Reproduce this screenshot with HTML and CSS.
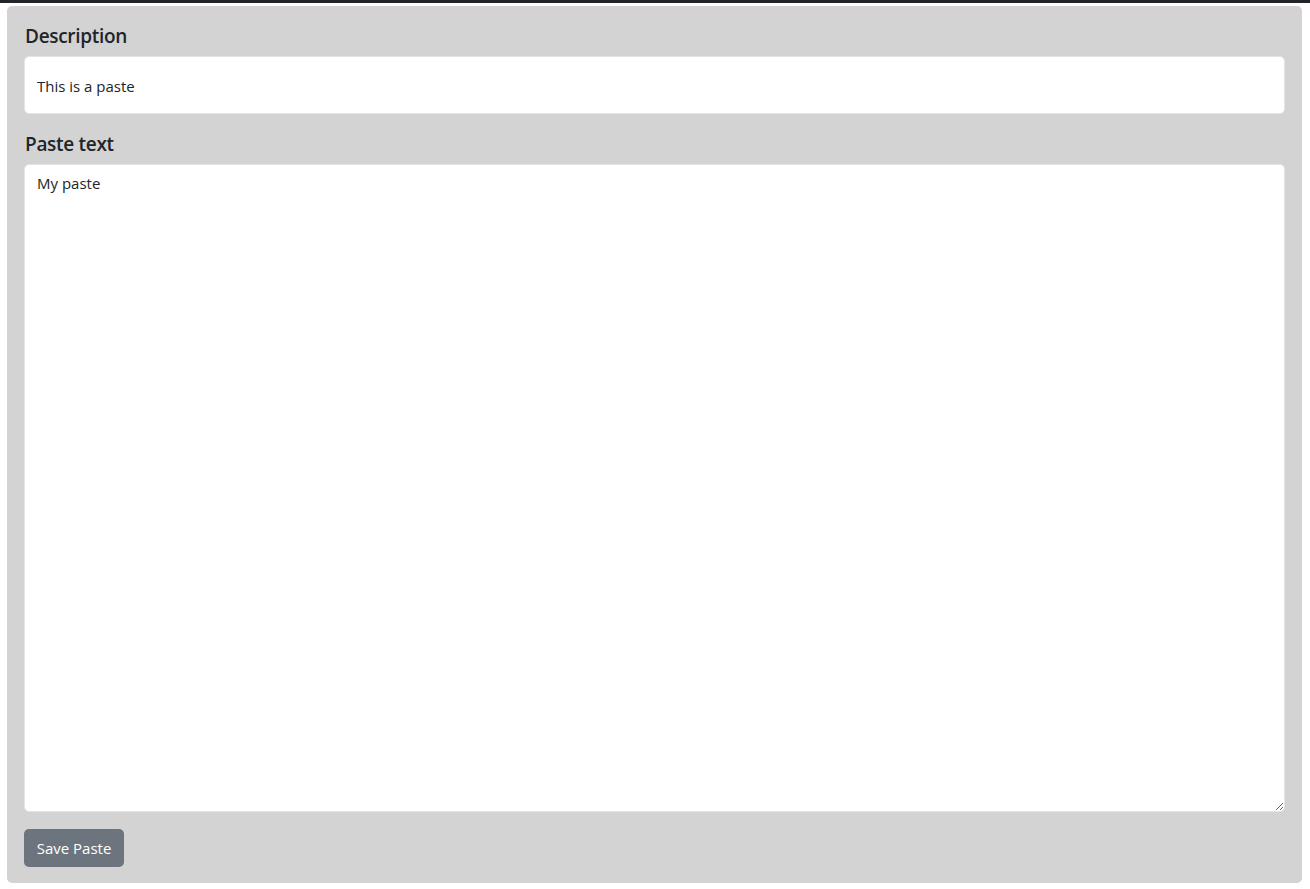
FILE: index.html
```html
<!DOCTYPE html>
<html>
<head>
<meta charset="utf-8">
<link rel="stylesheet" href="styles.css">
</head>
<body>
<div class="topbar"></div>
<form class="card">
  <label class="label" for="desc">Description</label>
  <input id="desc" class="input" type="text" value="This is a paste">
  <label class="label label-second" for="text">Paste text</label>
  <textarea id="text" class="textarea">My paste</textarea>
  <div class="actions"><button type="button" class="btn">Save Paste</button></div>
</form>
</body>
</html>
```

FILE: styles.css
```css
html, body {
  margin: 0;
  padding: 0;
  background: #fff;
  font-family: "Open Sans", "Noto Sans", sans-serif;
  color: #212529;
}
.topbar {
  height: 3px;
  background: #212529;
}
.card {
  margin: 3px 8px 0 7px;
  background: #d3d3d3;
  border-radius: 5px;
  padding: 18px 17px 16px 17px;
  display: flex;
  flex-direction: column;
  height: 877px;
  box-sizing: border-box;
}
.label {
  font-size: 19px;
  font-weight: 600;
  line-height: 24px;
  margin-bottom: 8px;
  padding-left: 1px;
  letter-spacing: -0.3px;
}
.label-second {
  margin-top: 18px;
}
.input, .textarea {
  font-family: inherit;
  font-size: 15px;
  color: #212529;
  background: #fff;
  border: 1px solid #e4e4e4;
  border-radius: 5px;
  box-sizing: border-box;
  width: 100%;
  outline: none;
}
.input {
  height: 58px;
  padding: 2px 12px 0 12px;
}
.textarea {
  height: 648px;
  padding: 6px 12px;
  line-height: 24px;
  resize: vertical;
}
.actions {
  margin-top: 17px;
}
.btn {
  font-family: inherit;
  font-size: 15px;
  color: #fff;
  background: #6c757d;
  border: none;
  border-radius: 5px;
  height: 38px;
  width: 100px;
  padding: 0;
}
```
